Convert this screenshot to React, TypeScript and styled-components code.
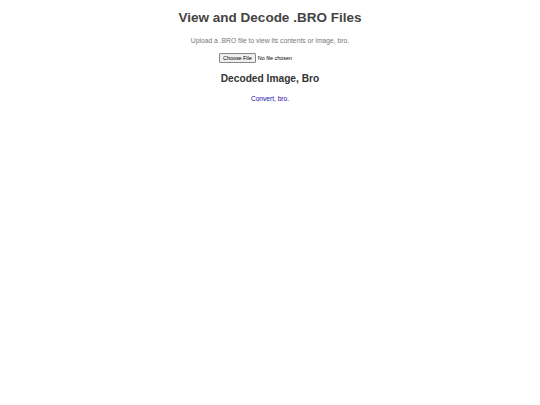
import styled, { createGlobalStyle } from 'styled-components';

const GlobalStyle = createGlobalStyle`
  body {
    margin: 0;
    background: #ffffff;
    font-family: 'Liberation Sans', Arial, sans-serif;
  }
`;

const Page = styled.main`
  display: flex;
  flex-direction: column;
  align-items: center;
  padding-top: 10px;
  color: #444;
`;

const Title = styled.h1`
  margin: 0;
  font-size: 13.5px;
  font-weight: bold;
  color: #444;
`;

const Lead = styled.p`
  margin: 12px 0 0;
  font-size: 6.75px;
  color: #777;
`;

const FileInput = styled.input`
  margin-top: 9px;
  font-size: 5.4px;
  font-family: 'Liberation Sans', Arial, sans-serif;
  color: #000;

  &::file-selector-button {
    font-size: 5.4px;
    padding: 1px 3px;
    margin-right: 2px;
    border: 1px solid #888;
    border-radius: 1px;
    background: #efefef;
  }
`;

const Heading = styled.h2`
  margin: 10px 0 0;
  font-size: 10.2px;
  font-weight: bold;
  color: #333;
`;

const ConvertLink = styled.a`
  margin-top: 11px;
  font-size: 6.6px;
  color: #1a0dab;
  text-decoration: underline;
  text-decoration-thickness: 1px;
`;

const App = () => (
  <>
    <GlobalStyle />
    <Page>
      <Title>View and Decode .BRO Files</Title>
      <Lead>Upload a .BRO file to view its contents or image, bro.</Lead>
      <FileInput type="file" />
      <Heading>Decoded Image, Bro</Heading>
      <ConvertLink href="#">Convert, bro.</ConvertLink>
    </Page>
  </>
);

export default App;
